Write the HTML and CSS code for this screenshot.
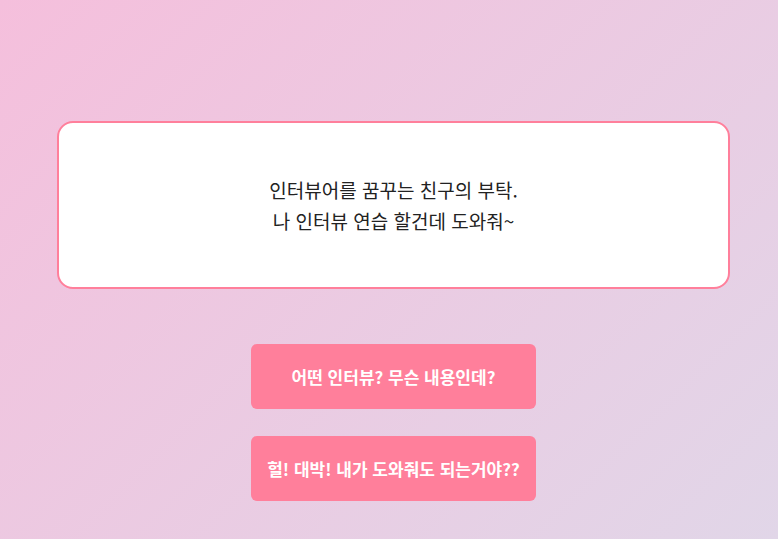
FILE: index.html
```html
<!DOCTYPE html>
<html lang="ko">
<head>
<meta charset="utf-8">
<link rel="stylesheet" href="styles.css">
</head>
<body>
<main class="page">
  <section class="card">
    <p class="message">인터뷰어를 꿈꾸는 친구의 부탁.<br>나 인터뷰 연습 할건데 도와줘~</p>
  </section>
  <div class="choices">
    <button class="choice">어떤 인터뷰? 무슨 내용인데?</button>
    <button class="choice">헐! 대박! 내가 도와줘도 되는거야??</button>
  </div>
</main>
</body>
</html>
```

FILE: styles.css
```css
html, body {
  margin: 0;
  padding: 0;
  height: 100%;
}
body {
  background: linear-gradient(135deg, #f5bfdc 0%, #e1d6e8 100%);
  font-family: "Noto Sans CJK KR", "Noto Sans", sans-serif;
  overflow: hidden;
}
.page {
  box-sizing: border-box;
  padding: 121px 48px 0 57px;
  display: flex;
  flex-direction: column;
  align-items: center;
}
.card {
  box-sizing: border-box;
  width: 673px;
  height: 168px;
  background: #fff;
  border: 2px solid #ff7f9b;
  border-radius: 16px;
  display: flex;
  align-items: center;
  justify-content: center;
}
.message {
  margin: 0;
  text-align: center;
  font-size: 19px;
  line-height: 31px;
  color: #222;
}
.choices {
  margin-top: 55px;
  display: flex;
  flex-direction: column;
  gap: 27px;
  align-items: center;
}
.choice {
  width: 285px;
  height: 65px;
  border: none;
  border-radius: 6px;
  background: #ff7f9b;
  color: #fff;
  font-family: "Noto Sans CJK KR", "Noto Sans", sans-serif;
  font-size: 17px;
  font-weight: 700;
  padding: 0;
}
```
